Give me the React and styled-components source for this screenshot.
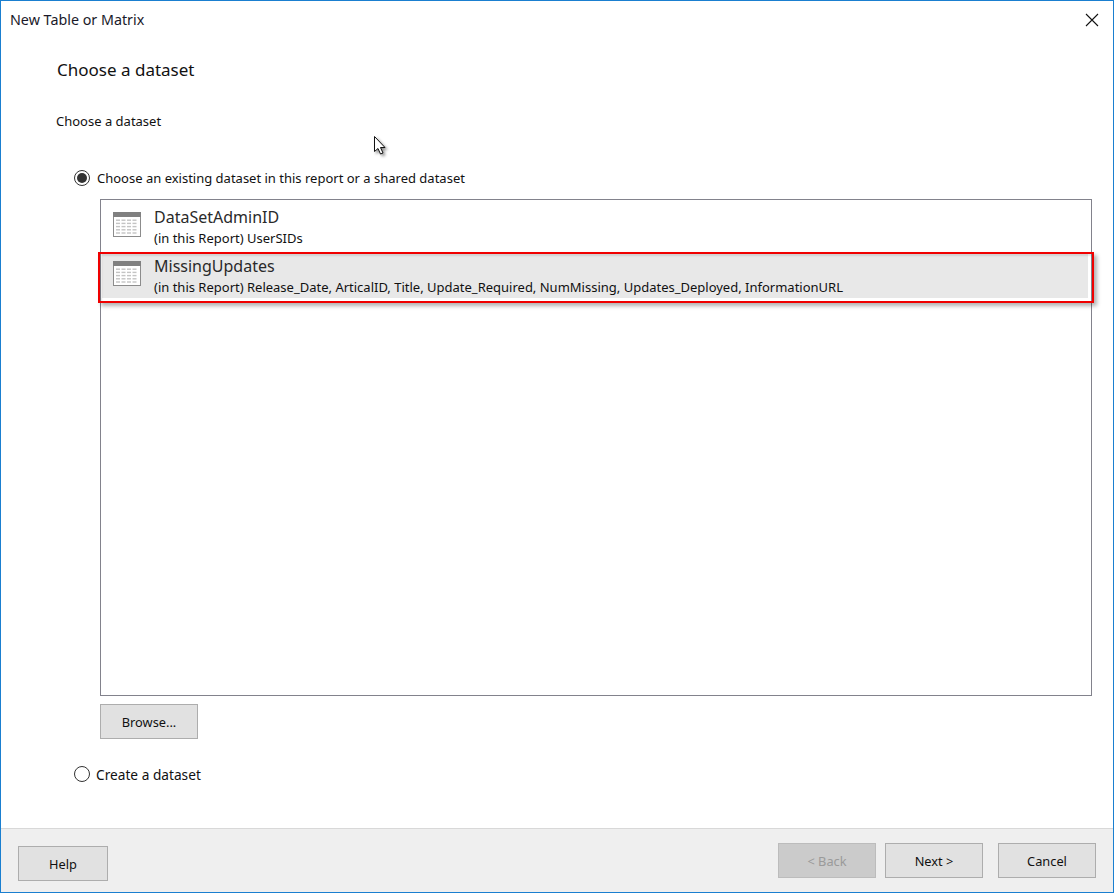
import React from "react";
import styled, { createGlobalStyle } from "styled-components";

const Global = createGlobalStyle`
  html, body { margin: 0; padding: 0; background: #fff; }
  body { font-family: "Noto Sans", "Open Sans", "Liberation Sans", sans-serif; color: #111; }
  * { box-sizing: border-box; }
`;

const Dialog = styled.div`
  width: 1114px;
  height: 893px;
  display: flex;
  flex-direction: column;
  border: 1px solid #1a7fd0;
  background: #fff;
  position: relative;
  overflow: hidden;
`;

const TitleBar = styled.header`
  height: 38px;
  flex: none;
  display: flex;
  align-items: center;
  justify-content: space-between;
  padding: 0 14px 1px 9px;
`;

const WindowTitle = styled.h1`
  margin: 0;
  font-size: 14.3px;
  font-weight: 400;
  color: #1a1a2a;
`;

const CloseButton = styled.button`
  width: 14px;
  height: 14px;
  padding: 0;
  border: 0;
  background: none;
  display: block;
  line-height: 0;
`;

const Content = styled.main`
  flex: 1;
  display: flex;
  flex-direction: column;
  padding: 0 21px 0 55px;
`;

const PageTitle = styled.h2`
  margin: 19px 0 0 1px;
  height: 24px;
  line-height: 24px;
  font-size: 17px;
  font-weight: 400;
  color: #111;
`;

const SectionLabel = styled.p`
  margin: 30px 0 0;
  height: 18px;
  line-height: 18px;
  font-size: 13px;
  color: #111;
`;

const RadioRow = styled.label`
  display: flex;
  align-items: center;
  gap: ${(p) => p.$gap}px;
  margin: ${(p) => p.$top}px 0 0 18px;
  height: 18px;
  font-size: ${(p) => p.$size}px;
  color: #111;
`;

const RadioMark = styled.span`
  width: 16px;
  height: 16px;
  flex: none;
  border-radius: 50%;
  border: 1px solid #333;
  background: #fff;
  display: flex;
  align-items: center;
  justify-content: center;
  &::after {
    content: "";
    display: ${(p) => (p.$checked ? "block" : "none")};
    width: 10px;
    height: 10px;
    border-radius: 50%;
    background: #333;
  }
`;

const DatasetList = styled.div`
  margin: 12px 0 0 44px;
  height: 497px;
  flex: none;
  border: 1px solid #82828c;
  padding: 3px 3px 0 1px;
  display: flex;
  flex-direction: column;
  gap: 2px;
  background: #fff;
`;

const DatasetRow = styled.div`
  height: ${(p) => (p.$selected ? 46 : 47)}px;
  position: relative;
  display: flex;
  align-items: flex-start;
  gap: 12px;
  padding: 4px 0 0 11px;
  background: ${(p) => (p.$selected ? "#e8e8e8" : "transparent")};
`;

const RowIcon = styled.svg`
  flex: none;
  margin-top: 5px;
`;

const RowText = styled.div`
  display: flex;
  flex-direction: column;
  min-width: 0;
`;

const RowName = styled.span`
  font-size: 16px;
  line-height: 21px;
  color: #2a2a2a;
`;

const RowDetail = styled.span`
  font-size: 13px;
  line-height: 20px;
  color: #111;
  white-space: nowrap;
`;

const Highlight = styled.div`
  position: absolute;
  left: -4px;
  right: -6px;
  top: 0;
  bottom: -5px;
  border: 2px solid #f00000;
  box-shadow: 3px 3px 4px rgba(0, 0, 0, 0.3), inset 2px 2px 2px rgba(0, 0, 0, 0.1);
  pointer-events: none;
`;

const Button = styled.button`
  width: ${(p) => p.$width || 98}px;
  height: 35px;
  flex: none;
  border: 1px solid ${(p) => (p.disabled ? "#bcbcbc" : "#adadad")};
  background: ${(p) => (p.disabled ? "#cbcbcb" : "#e1e1e1")};
  color: ${(p) => (p.disabled ? "#9a9a9a" : "#111")};
  font-family: inherit;
  font-size: 12.8px;
  padding: 0;
`;

const BrowseButton = styled(Button)`
  margin: 8px 0 0 44px;
`;

const Footer = styled.footer`
  height: 64px;
  flex: none;
  background: #efefef;
  border-top: 1px solid #d8d8d8;
  display: flex;
  align-items: flex-start;
  padding: 17px 17px 0 17px;
`;

const FooterActions = styled.div`
  margin-left: auto;
  margin-top: -3px;
  display: flex;
  gap: 9px;
`;

const CancelButton = styled(Button)`
  margin-left: 6px;
`;

const Cursor = styled.svg`
  position: absolute;
  left: 372px;
  top: 134px;
  filter: drop-shadow(2px 2px 1.5px rgba(0, 0, 0, 0.45));
`;

function TableIcon() {
  const rows = [0, 1, 2, 3, 4];
  const cols = [0, 1, 2, 3];
  return (
    <RowIcon width="29" height="26" viewBox="0 0 29 26">
      <rect x="0.5" y="0.5" width="27" height="24" fill="#fff" stroke="#8c8c8c" />
      <rect x="0" y="0" width="28" height="5" fill="#808080" />
      {rows.map((r) =>
        cols.map((c) => (
          <rect key={`${r}-${c}`} x={3 + c * 5.5} y={7.5 + r * 3.2} width="4" height="1.4" fill="#c4c4c4" />
        ))
      )}
    </RowIcon>
  );
}

export default function App() {
  return (
    <>
      <Global />
      <Dialog>
        <TitleBar>
          <WindowTitle>New Table or Matrix</WindowTitle>
          <CloseButton aria-label="Close">
            <svg width="14" height="14" viewBox="0 0 14 14">
              <path d="M1 1 L13 13 M13 1 L1 13" stroke="#111" strokeWidth="1.1" fill="none" />
            </svg>
          </CloseButton>
        </TitleBar>
        <Content>
          <PageTitle>Choose a dataset</PageTitle>
          <SectionLabel>Choose a dataset</SectionLabel>
          <RadioRow $top={39} $gap={7} $size={13}>
            <RadioMark $checked />
            Choose an existing dataset in this report or a shared dataset
          </RadioRow>
          <DatasetList>
            <DatasetRow>
              <TableIcon />
              <RowText>
                <RowName>DataSetAdminID</RowName>
                <RowDetail>(in this Report) UserSIDs</RowDetail>
              </RowText>
            </DatasetRow>
            <DatasetRow $selected>
              <TableIcon />
              <RowText>
                <RowName>MissingUpdates</RowName>
                <RowDetail>
                  (in this Report) Release_Date, ArticalID, Title, Update_Required, NumMissing, Updates_Deployed, InformationURL
                </RowDetail>
              </RowText>
              <Highlight />
            </DatasetRow>
          </DatasetList>
          <BrowseButton>Browse...</BrowseButton>
          <RadioRow $top={26} $gap={6} $size={13.7}>
            <RadioMark />
            Create a dataset
          </RadioRow>
        </Content>
        <Footer>
          <Button $width={90}>Help</Button>
          <FooterActions>
            <Button disabled>&lt; Back</Button>
            <Button>Next &gt;</Button>
            <CancelButton>Cancel</CancelButton>
          </FooterActions>
        </Footer>
        <Cursor width="16" height="22" viewBox="0 0 16 22">
          <path d="M1.5 1.5 L1.5 16.5 L5 13.5 L7.5 19 L10 18 L7.5 12.5 L12 12.5 Z" fill="#fff" stroke="#111" strokeWidth="1" />
        </Cursor>
      </Dialog>
    </>
  );
}
